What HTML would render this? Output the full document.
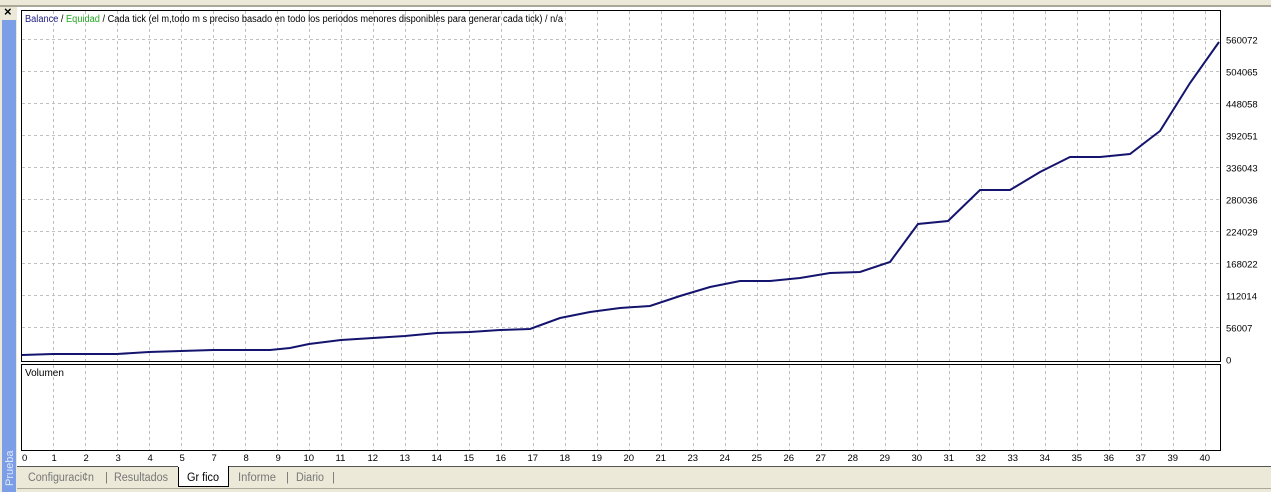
<!DOCTYPE html>
<html><head><meta charset="utf-8"><style>
body{margin:0;width:1271px;height:492px;overflow:hidden;background:#ece9d8;font-family:"Liberation Sans",Tahoma,sans-serif;position:relative}
svg text{font-family:"Liberation Sans",sans-serif}
</style></head><body>
<svg width="1271" height="492" style="position:absolute;left:0;top:0">
<rect x="0" y="0" width="1271" height="492" fill="#ece9d8"/>
<rect x="0" y="5" width="1271" height="2" fill="#aca899"/>
<rect x="2" y="20" width="14" height="472" fill="#7b9ee6"/>
<rect x="17" y="7" width="1254" height="459" fill="#fff"/>
<text x="4" y="16" font-size="13" font-weight="bold">×</text>
<text transform="translate(13,486) rotate(-90)" font-size="11" fill="#dfe8fb">Prueba</text>
<g id="grid" stroke="#c0c0c0" stroke-dasharray="3,3" stroke-width="1"></g>
<rect x="21.5" y="10.5" width="1199" height="351" fill="none" stroke="#000"/>
<rect x="21.5" y="364.5" width="1199" height="86" fill="none" stroke="#000"/>
<g id="lbl" font-size="9.5" fill="#000"></g>
<polyline fill="none" stroke="#14146e" stroke-width="2" points="22,355 53,354 85,354 117,354 149,352 181,351 213,350 245,350 270,350 290,348 309,344 341,340 373,338 405,336 437,333 470,332 500,330 530,329 560,318 590,312 620,308 650,306 680,296 710,287 740,281 770,281 800,278 830,273 860,272 890,262 918,224 948,221 980,190 1010,190 1040,172 1070,157 1100,157 1130,154 1160,131 1190,83 1219,42"/>
<text x="25" y="22" font-size="10" textLength="538" lengthAdjust="spacingAndGlyphs"><tspan fill="#1a1a80">Balance</tspan> / <tspan fill="#22aa22">Equidad</tspan> / Cada tick (el m,todo m s preciso basado en todo los periodos menores disponibles para generar cada tick)  / n/a</text>
<text x="25" y="376" font-size="10">Volumen</text>
<rect x="17" y="466" width="1254" height="1" fill="#555"/>
<rect x="178.5" y="466.5" width="50" height="20" fill="#fff" stroke="#000"/>
<rect x="178" y="466" width="50" height="1" fill="#fff"/>
<g font-size="11.5" fill="#777">
<text x="28" y="481" textLength="66" lengthAdjust="spacingAndGlyphs">Configuraci¢n</text><text x="105" y="481">|</text>
<text x="114" y="481" textLength="54" lengthAdjust="spacingAndGlyphs">Resultados</text>
<text x="187" y="481" fill="#000" textLength="32" lengthAdjust="spacingAndGlyphs">Gr fico</text>
<text x="238" y="481" textLength="38" lengthAdjust="spacingAndGlyphs">Informe</text><text x="286" y="481">|</text>
<text x="296" y="481" textLength="28" lengthAdjust="spacingAndGlyphs">Diario</text><text x="332" y="481">|</text>
</g>
<rect x="17" y="488" width="1254" height="1" fill="#aca899"/>
</svg>
<script>
var ns="http://www.w3.org/2000/svg",g=document.getElementById('grid'),l=document.getElementById('lbl');
function ln(x1,y1,x2,y2){var e=document.createElementNS(ns,'line');e.setAttribute('x1',x1);e.setAttribute('y1',y1);e.setAttribute('x2',x2);e.setAttribute('y2',y2);g.appendChild(e);}
function tx(x,y,s,a){var e=document.createElementNS(ns,'text');e.setAttribute('x',x);e.setAttribute('y',y);if(a)e.setAttribute('text-anchor',a);e.textContent=s;l.appendChild(e);}
var labs=["0","1","2","3","4","5","7","8","9","10","11","12","13","14","15","16","17","18","19","20","21","23","24","25","26","27","28","29","30","31","32","33","34","35","36","37","39","40"];
for(var k=0;k<labs.length;k++){var x=21.5+32*k;if(k>0){ln(x,11,x,361);ln(x,365,x,450);}tx(k==0?22:x-2+(labs[k].length>1?-4:0),461,labs[k]);}
var yl=["560072","504065","448058","392051","336043","280036","224029","168022","112014","56007","0"];
for(var i=0;i<11;i++){var y=39.5+32*i;if(i<10)ln(22,y,1220,y);tx(1226,y+4,yl[i]);}
</script>
</body></html>
